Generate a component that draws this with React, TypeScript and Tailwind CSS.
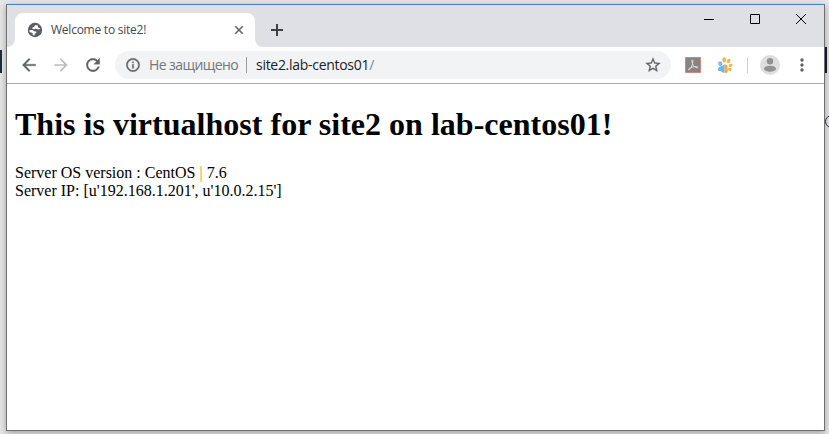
import type { ReactNode } from 'react';

const uiFont = "font-['Open_Sans','Noto_Sans',sans-serif]";

function Icon({ d, className }: { d: string; className: string }) {
  return (
    <svg viewBox="0 0 24 24" className={`shrink-0 fill-current ${className}`} aria-hidden="true">
      <path d={d} />
    </svg>
  );
}

const icons = {
  back: 'M20 11H7.830l5.590-5.590L12 4l-8 8 8 8 1.410-1.410L7.830 13H20v-2z',
  forward: 'M12 4l-1.410 1.410L16.170 11H4v2h12.170l-5.580 5.590L12 20l8-8z',
  reload:
    'M17.650 6.350C16.200 4.900 14.210 4 12 4c-4.420 0-7.990 3.580-7.990 8s3.570 8 7.990 8c3.730 0 6.840-2.550 7.730-6h-2.080c-.82 2.330-3.040 4-5.650 4-3.310 0-6-2.690-6-6s2.690-6 6-6c1.660 0 3.140.69 4.220 1.780L13 11h7V4l-2.350 2.350z',
  info: 'M11 17h2v-6h-2v6zm1-15C6.480 2 2 6.480 2 12s4.480 10 10 10 10-4.480 10-10S17.520 2 12 2zm0 18c-4.410 0-8-3.590-8-8s3.590-8 8-8 8 3.590 8 8-3.590 8-8 8zM11 9h2V7h-2v2z',
  star: 'M22 9.240l-7.190-.62L12 2 9.190 8.630 2 9.240l5.460 4.730L5.820 21 12 17.270 18.180 21l-1.630-7.030L22 9.240zM12 15.400l-3.760 2.270 1-4.280-3.320-2.880 4.380-.38L12 6.100l1.710 4.040 4.380.38-3.320 2.880 1 4.280L12 15.400z',
  close:
    'M19 6.410L17.590 5 12 10.590 6.410 5 5 6.410 10.590 12 5 17.590 6.410 19 12 13.410 17.590 19 19 17.590 13.410 12z',
  more: 'M12 8c1.100 0 2-.9 2-2s-.9-2-2-2-2 .9-2 2 .9 2 2 2zm0 2c-1.100 0-2 .9-2 2s.9 2 2 2 2-.9 2-2-.9-2-2-2zm0 6c-1.100 0-2 .9-2 2s.9 2 2 2 2-.9 2-2-.9-2-2-2z',
};

function GlobeIcon() {
  return (
    <svg viewBox="0 0 16 16" className="size-4 shrink-0">
      <circle cx="8" cy="8" r="7.200" fill="#5b5f64" />
      <path
        d="M10.800 3.200 8.200 3.300 7.400 4.500 5.600 5.300 5.400 6.900 7.300 7.200 8.600 6.600 10 7.300 12.600 7.300 13.200 6.300 11 5.600z"
        fill="#fff"
      />
      <path
        d="M2.300 8.200 5.400 8.100 7 9.200 9 9.400 9.300 10.700 7.900 11.700 7.300 13.400 5.700 12.900 5.700 11.200 4 10.500 2.500 9.700z"
        fill="#fff"
      />
    </svg>
  );
}

function CaptionButton({ label, children }: { label: string; children: ReactNode }) {
  return (
    <button aria-label={label} className="flex h-[28px] w-[46px] items-center justify-center">
      <svg viewBox="0 0 10 10" className="size-[10px] fill-none stroke-black" strokeWidth="1">
        {children}
      </svg>
    </button>
  );
}

function TabStrip() {
  return (
    <div className="flex h-[42px] shrink-0 items-end bg-[#dfe0e5]">
      <svg viewBox="0 0 8 8" className="size-2 fill-white">
        <path d="M8 0v8H0a8 8 0 0 0 8-8z" />
      </svg>
      <div className="flex h-[34px] w-[240px] items-center rounded-t-lg bg-white pl-3">
        <GlobeIcon />
        <span className={`${uiFont} ml-[8px] w-[181px] text-[12px] leading-4 tracking-[-0.24px] whitespace-nowrap text-[#45494d]`}>
          Welcome to site2!
        </span>
        <Icon d={icons.close} className="size-[14px] stroke-current stroke-[0.8] text-[#5f6368]" />
      </div>
      <svg viewBox="0 0 8 8" className="size-2 fill-white">
        <path d="M0 0v8h8a8 8 0 0 1-8-8z" />
      </svg>
      <svg viewBox="0 0 12 12" className="mb-[11px] ml-2 size-3 fill-[#3c4043]">
        <path d="M5 0h2v5h5v2H7v5H5V7H0V5h5z" />
      </svg>
      <div className="mb-[14px] ml-auto flex">
        <CaptionButton label="Minimize">
          <path d="M0 5.500h10" />
        </CaptionButton>
        <CaptionButton label="Maximize">
          <path d="M.5.5h9v9h-9z" />
        </CaptionButton>
        <CaptionButton label="Close">
          <path d="M0 0l10 10M10 0L0 10" />
        </CaptionButton>
      </div>
    </div>
  );
}

function PdfIcon() {
  return (
    <svg viewBox="0 0 16 16" className="size-4 shrink-0">
      <path d="M.5.5h15v15H.5z" fill="#858383" stroke="#d58676" />
      <path
        d="M7.300 2.800c1.100.2.5 3.100-.1 5.200-.8 2.600-2.500 5.100-3.500 4.900-1.200-.5 1.500-2.300 4-2.900 2.500-.6 5.300-.4 5.200.5-.3 1-2.900-.2-4.500-2.200C7.100 6.600 6.400 2.900 7.300 2.800z"
        fill="none"
        stroke="#e4e0e0"
        strokeWidth="1"
      />
    </svg>
  );
}

function PawIcon() {
  return (
    <svg viewBox="0 0 16 16" className="size-4 shrink-0">
      <ellipse cx="3.300" cy="6.600" rx="2.100" ry="2.400" fill="#79baf5" transform="rotate(-25 3.300 6.600)" />
      <ellipse cx="7.200" cy="3" rx="1.900" ry="2.700" fill="#efb64e" />
      <ellipse cx="11.600" cy="4" rx="1.700" ry="2.400" fill="#efb64e" transform="rotate(25 11.600 4)" />
      <ellipse cx="13.500" cy="8.300" rx="2.100" ry="1.500" fill="#efb64e" transform="rotate(-20 13.500 8.300)" />
      <ellipse cx="12.800" cy="12.400" rx="2" ry="1.500" fill="#efb64e" transform="rotate(30 12.800 12.400)" />
      <path d="M7.500 7.600c-2 1.600-5.500 1.800-6.500 3.800-.7 2 1 2.400 2.300 2.700 1.200.3 1.800 1.500 4.200 1.700z" fill="#6db3f2" />
      <path d="M7.500 7.600c2.500-.5 3.300 1 3 2.500-.2 2 .5 3 .3 4.300-.2 1.300-1.500 1.700-3.300 1.400z" fill="#efad3d" />
    </svg>
  );
}

function Toolbar() {
  return (
    <div className="flex h-[37px] shrink-0 items-center border-b border-[#aaacae] bg-white pl-[12px] text-[#5f6368]">
      <Icon d={icons.back} className="size-5 stroke-current stroke-[0.4]" />
      <Icon d={icons.forward} className="ml-3 size-5 text-[#babcbe]" />
      <Icon d={icons.reload} className="ml-3 size-5 stroke-current stroke-[0.4]" />
      <div className={`${uiFont} ml-3 flex h-7 w-[556px] items-center rounded-full bg-[#f1f3f4] pl-[10px] text-[14px] leading-5 whitespace-nowrap`}>
        <Icon d={icons.info} className="size-4 stroke-current stroke-[0.5]" />
        <span className="ml-2 w-[97px] tracking-[-0.58px] text-[#74777b]">Не защищено</span>
        <span className="h-4 w-px bg-[#9b9ea1]" />
        <span className="ml-[9px] tracking-[-0.29px] text-[#202124]">
          site2.lab-centos01<span className="text-[#80868b]">/</span>
        </span>
        <Icon d={icons.star} className="mr-[9px] ml-auto size-[18px] stroke-current stroke-[0.3]" />
      </div>
      <div className="ml-[14px] flex items-center">
        <PdfIcon />
        <span className="w-4" />
        <PawIcon />
        <span className="ml-[14px] h-4 w-px bg-[#ced0d2]" />
        <svg viewBox="0 0 20 20" className="ml-3 size-5">
          <circle cx="10" cy="10" r="10" fill="#dedede" />
          <circle cx="10" cy="6.300" r="3.200" fill="#929292" />
          <ellipse cx="10" cy="13.700" rx="6" ry="3" fill="#929292" />
        </svg>
        <Icon d={icons.more} className="ml-3 size-5" />
      </div>
    </div>
  );
}

export default function App() {
  return (
    <div className="relative h-[434px] w-[829px] overflow-hidden bg-[#e7e7e7] pt-1 pl-1.5">
      <div className="absolute top-[50px] left-0 h-[23px] w-[2px] bg-[#1f2a40]" />
      <div className="absolute top-[47px] left-[825px] h-[26px] w-[2px] bg-[#171b35]" />
      <div className="absolute top-[115px] left-[825px] size-[13px] rounded-full border border-[#30345c]" />
      <div className="relative flex h-[427px] w-[819px] flex-col border border-t-[#4a7dca] border-r-[#707070] border-b-[#707070] border-l-[#707070] bg-white shadow-[0_2px_7px_rgba(0,0,0,0.32)]">
        <TabStrip />
        <Toolbar />
        <main className="px-2 pt-[22px] font-['Liberation_Serif',serif] text-[16px] text-black">
          <h1 className="text-[32px] leading-[37px] font-bold tracking-[0.015px] whitespace-nowrap">
            This is virtualhost for site2 on lab-centos01!
          </h1>
          <p className="mt-[21px] leading-[18px]">
            Server OS version : CentOS <span className="text-[#f08a28]">|</span> 7.6
            <br />
            Server IP: [u'192.168.1.201', u'10.0.2.15']
          </p>
        </main>
      </div>
    </div>
  );
}
